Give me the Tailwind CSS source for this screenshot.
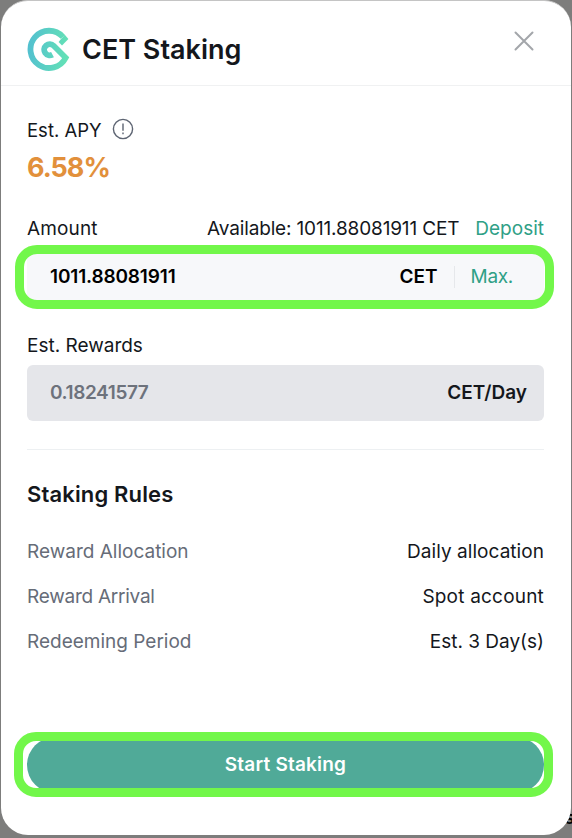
<!DOCTYPE html>
<html lang="en">
<head>
  <meta charset="UTF-8">
  <meta name="viewport" content="width=device-width, initial-scale=1.0">
  <title>CET Staking</title>
  <script src="https://cdn.jsdelivr.net/npm/@tailwindcss/browser@4"></script>
</head>
<body class="relative bg-[#7d7d7c] h-screen overflow-hidden font-['Inter',sans-serif] text-[#14171c]">

<!-- Page text behind the modal -->
<span class="absolute left-[565px] top-[806px] text-[18px] leading-6 font-semibold italic text-black">s</span>

<!-- Staking Modal -->
<div class="relative mx-px h-[835px] bg-white rounded-[27px] border-t border-[#c4c4c4] flex flex-col">

  <!-- Header -->
  <header class="h-[85px] shrink-0 border-b border-[#f0f1f2] flex items-start pl-[26px] pr-[37px]">
    <svg class="w-[44px] h-[45px] mt-[26px]" viewBox="0 0 44 45" fill="none">
      <defs>
        <linearGradient id="logo" x1="0" y1="20" x2="42" y2="24" gradientUnits="userSpaceOnUse">
          <stop stop-color="#52bfd0"/>
          <stop offset="1" stop-color="#64e2b5"/>
        </linearGradient>
      </defs>
      <path d="M25.5 27.6A5.6 5.6 0 1 1 26.7 18.7L38.7 30.7A18.6 18.6 0 1 1 35.9 9.9" stroke="url(#logo)" stroke-width="5.8"/>
      <path d="M37.8 7.7L41.4 12L35 18.6L31.6 15L34 12Z" fill="url(#logo)"/>
    </svg>
    <h1 class="ml-[11px] mt-[29px] text-[27px] leading-[40px] font-semibold grow">CET Staking</h1>
    <button class="mt-[30px]">
      <svg class="w-5 h-5" viewBox="0 0 20 20" fill="none" stroke="#a3a6aa" stroke-width="2" stroke-linecap="round">
        <path d="M1.5 1.5l17 17M18.5 1.5l-17 17"/>
      </svg>
    </button>
  </header>

  <main class="pl-[26px] pr-[27px] text-[19px] leading-6">
    <!-- APY -->
    <div class="mt-[32px] flex items-center">
      <span class="text-[18.5px]">Est. APY</span>
      <svg class="w-[22px] h-[22px] ml-[10px] -mt-[2px]" viewBox="0 0 22 22" fill="none" stroke="#5d6472" stroke-width="1.4">
        <circle cx="11" cy="11" r="9.6"/>
        <path d="M11 5.5v7.2M11 14.6v1.6"/>
      </svg>
    </div>
    <p class="mt-[10px] text-[27px] leading-[32px] font-bold tracking-[-1px] text-[#e2903b]">6.58%</p>

    <!-- Amount -->
    <div class="mt-[33px] flex">
      <span class="grow tracking-[0.15px]">Amount</span>
      <span class="tracking-[-0.15px]">Available: 1011.88081911 CET</span>
      <a class="ml-[16px] text-[#2fa086]">Deposit</a>
    </div>
    <div class="relative mt-[8px] h-[56px] bg-[#f7f8fa] rounded-[6px] flex items-center pl-[23px] pr-[31px]">
      <span class="grow font-semibold text-black tracking-[-0.15px]">1011.88081911</span>
      <span class="font-semibold text-black">CET</span>
      <span class="w-px h-[22px] ml-[16px] mr-[16px] bg-[#e6e8eb]"></span>
      <a class="text-[#2fa086] tracking-[-0.3px]">Max.</a>
      <div class="absolute -left-[12px] -right-[10px] -top-[4px] h-[64px] border-[9px] border-[#72f74a] rounded-[22px]"></div>
    </div>

    <!-- Rewards -->
    <p class="mt-[29px]">Est. Rewards</p>
    <div class="mt-[7px] h-[56px] bg-[#e5e6ea] rounded-[6px] flex items-center pl-[23px] pr-[17px]">
      <span class="grow font-semibold text-[#6d727c] tracking-[-0.4px]">0.18241577</span>
      <span class="font-semibold">CET/Day</span>
    </div>

    <!-- Rules -->
    <div class="mt-[28px] border-t-[1.5px] border-[#edf0f2]"></div>
    <h2 class="mt-[30px] text-[22px] leading-[28px] font-semibold tracking-[0.15px]">Staking Rules</h2>
    <div class="mt-[32px] flex flex-col gap-[21px]">
      <div class="flex justify-between"><span class="text-[#666c78]">Reward Allocation</span><span class="tracking-[0.05px]">Daily allocation</span></div>
      <div class="flex justify-between"><span class="text-[#666c78] tracking-[-0.25px]">Reward Arrival</span><span class="tracking-[0.2px]">Spot account</span></div>
      <div class="flex justify-between"><span class="text-[#666c78]">Redeeming Period</span><span>Est. 3 Day(s)</span></div>
    </div>

    <!-- Submit -->
    <div class="relative mt-[83px] h-[56px]">
      <button class="w-full h-full rounded-full bg-[#50aa98] text-white font-semibold tracking-[0.2px]">Start Staking</button>
      <div class="absolute -left-[13px] -right-[9px] -top-[5px] h-[65px] border-[9px] border-[#72f74a] rounded-[22px]"></div>
    </div>
  </main>
</div>

</body>
</html>
